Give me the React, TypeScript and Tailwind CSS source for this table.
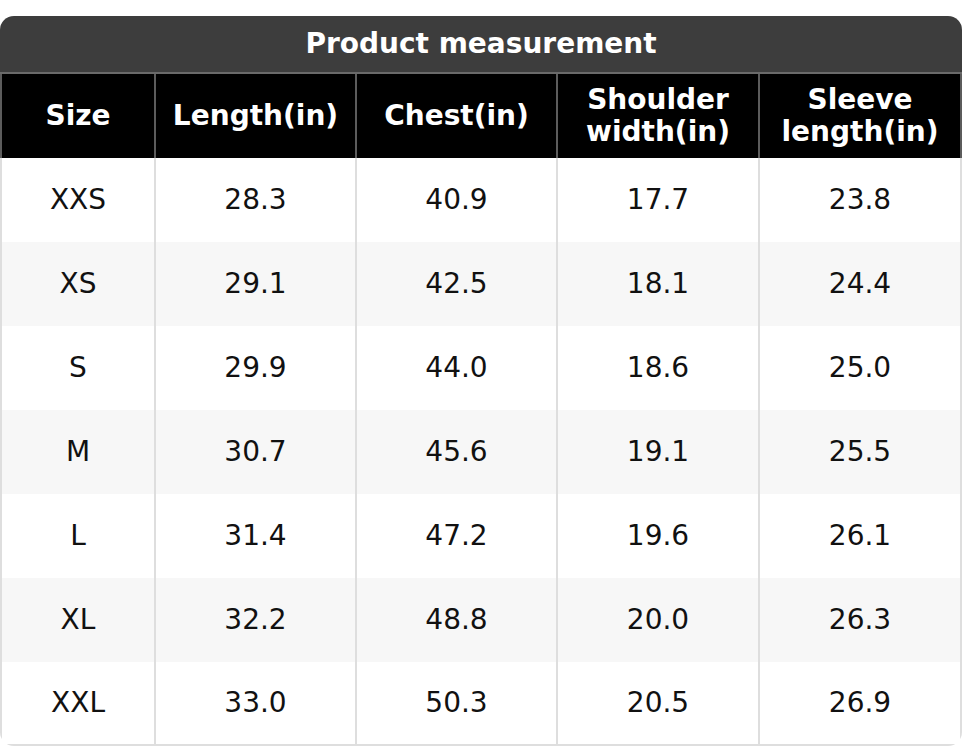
import React from "react";

const rows = [
  ["XXS", "28.3", "40.9", "17.7", "23.8"],
  ["XS", "29.1", "42.5", "18.1", "24.4"],
  ["S", "29.9", "44.0", "18.6", "25.0"],
  ["M", "30.7", "45.6", "19.1", "25.5"],
  ["L", "31.4", "47.2", "19.6", "26.1"],
  ["XL", "32.2", "48.8", "20.0", "26.3"],
  ["XXL", "33.0", "50.3", "20.5", "26.9"],
];

const App = () => {
  return (
    <div
      className="min-h-screen bg-white pt-4"
      style={{ fontFamily: '"DejaVu Sans", Verdana, sans-serif' }}
    >
      <div className="w-[962px] rounded-[14px] overflow-hidden">
        <table className="w-full table-fixed border-separate border-spacing-0 text-[28px] leading-[32px]">
          <colgroup>
            <col className="w-[156px]" />
            <col className="w-[201px]" />
            <col className="w-[201px]" />
            <col className="w-[202px]" />
            <col className="w-[202px]" />
          </colgroup>
          <thead>
            <tr>
              <th
                colSpan={5}
                className="h-[58px] bg-[#3d3d3d] text-white font-bold border-b-2 border-[#6a6a6a] p-0"
              >
                Product measurement
              </th>
            </tr>
            <tr className="bg-black text-white font-bold">
              <th className="h-[84px] px-2 border-l-2 border-r-2 border-[#5c5c5c]">Size</th>
              <th className="px-2 border-r-2 border-[#5c5c5c]">Length(in)</th>
              <th className="px-2 border-r-2 border-[#5c5c5c]">Chest(in)</th>
              <th className="px-2 border-r-2 border-[#5c5c5c]">
                Shoulder
                <br />
                width(in)
              </th>
              <th className="px-2 border-r-2 border-[#5c5c5c]">
                Sleeve
                <br />
                length(in)
              </th>
            </tr>
          </thead>
          <tbody className="text-[#111]">
            {rows.map((r, i) => (
              <tr key={r[0]} className={i % 2 === 1 ? "bg-[#f7f7f7]" : "bg-white"}>
                {r.map((c, j) => (
                  <td
                    key={j}
                    className={
                      "h-[84px] p-0 text-center border-r-2 border-[#dedede]" +
                      (j === 0 ? " border-l-2" : "") +
                      (i === rows.length - 1 ? " border-b-2" : "")
                    }
                  >
                    {c}
                  </td>
                ))}
              </tr>
            ))}
          </tbody>
        </table>
      </div>
    </div>
  );
};

export default App;
